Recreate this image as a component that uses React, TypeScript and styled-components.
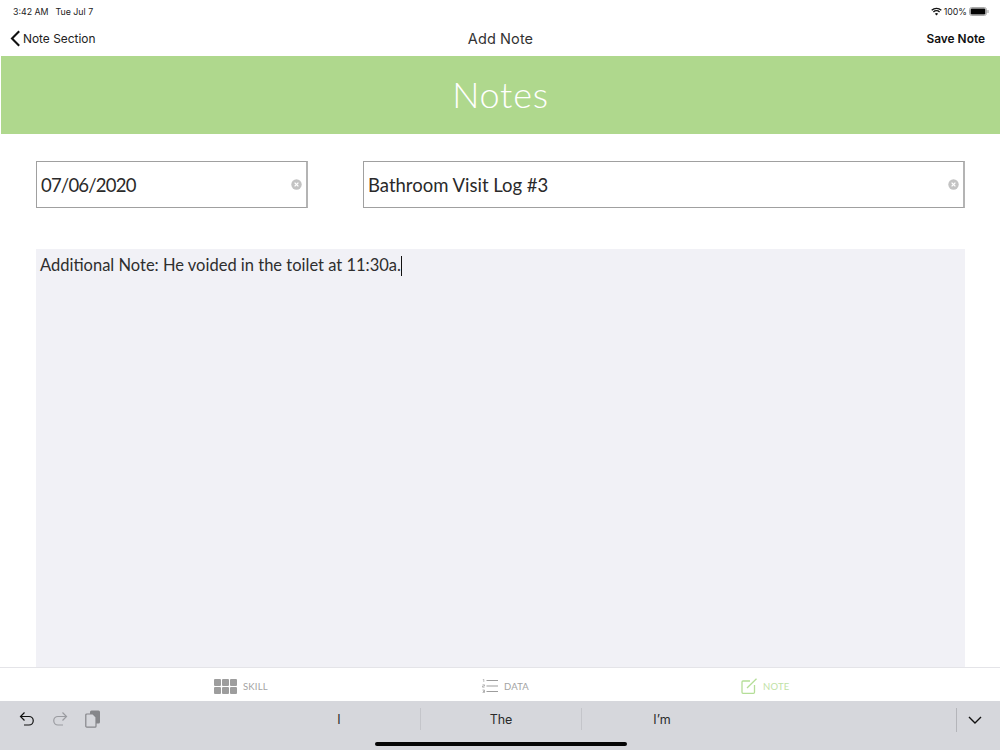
import React from "react";
import styled, { createGlobalStyle } from "styled-components";

const Global = createGlobalStyle`
  html, body { margin: 0; padding: 0; background: #fff; }
  #root { width: 1000px; height: 750px; overflow: hidden; }
`;

const Page = styled.div`
  width: 1000px;
  height: 750px;
  display: flex;
  flex-direction: column;
  background: #fff;
  overflow: hidden;
  font-family: Inter, "Liberation Sans", sans-serif;
  color: #111;
`;

const StatusBar = styled.div`
  height: 22px;
  flex: none;
  display: flex;
  align-items: center;
  justify-content: space-between;
  padding: 0 11px 0 13px;
  font-size: 8.8px;
  color: #222;
`;

const StatusGroup = styled.div<{ $gap: number }>`
  display: flex;
  align-items: center;
  gap: ${(p) => p.$gap}px;
`;

const NavBar = styled.div`
  height: 34px;
  box-sizing: border-box;
  flex: none;
  display: grid;
  grid-template-columns: 1fr auto 1fr;
  align-items: center;
  padding: 0 15px 2px 16px;
`;

const BackLink = styled.div`
  display: flex;
  align-items: center;
  gap: 2px;
  margin-left: -6px;
  font-size: 11.9px;
  color: #222;
`;

const NavTitle = styled.div`
  font-size: 14.5px;
  color: #333;
  letter-spacing: 0.1px;
`;

const SaveButton = styled.div`
  justify-self: end;
  font-size: 11.9px;
  font-weight: 600;
  color: #111;
`;

const Banner = styled.div`
  height: 78px;
  box-sizing: border-box;
  padding-bottom: 2px;
  flex: none;
  margin-left: 1px;
  background: #afd88d;
  display: flex;
  align-items: center;
  justify-content: center;
  font-family: Lato, sans-serif;
  font-weight: 300;
  font-size: 36px;
  letter-spacing: 0.8px;
  color: #fff;
`;

const Content = styled.div`
  flex: 1;
  min-height: 0;
  display: flex;
  flex-direction: column;
  padding: 27px 35px 0 36px;
  font-family: Lato, sans-serif;
`;

const FieldRow = styled.div`
  display: grid;
  grid-template-columns: 272px 602px;
  column-gap: 55px;
  flex: none;
`;

const Field = styled.div<{ $inset: number; $tracking?: number }>`
  height: 47px;
  box-sizing: border-box;
  border: 1px solid #a0a0a0;
  border-right: 2px solid #b4b4b4;
  display: flex;
  align-items: center;
  justify-content: space-between;
  padding: 0 4px 0 ${(p) => p.$inset}px;
  font-size: 18.5px;
  letter-spacing: ${(p) => p.$tracking ?? 0}px;
  color: #2a2a2a;
`;

const NoteArea = styled.div`
  flex: 1;
  min-height: 0;
  margin-top: 41px;
  background: #f1f1f6;
  padding: 6px 4px;
  font-size: 16.5px;
  line-height: 20px;
  color: #2e2e2e;
`;

const Caret = styled.span`
  display: inline-block;
  width: 1px;
  height: 20px;
  background: #111;
  vertical-align: -5px;
`;

const TabBar = styled.div`
  height: 34px;
  box-sizing: border-box;
  flex: none;
  border-top: 1px solid #e4e4e8;
  padding-top: 3px;
  display: grid;
  grid-template-columns: 214px 268px 259px 1fr;
  align-items: center;
  background: #fff;
`;

const Tab = styled.div<{ $active?: boolean; $col: number; $gap: number }>`
  grid-column: ${(p) => p.$col};
  display: flex;
  align-items: center;
  gap: ${(p) => p.$gap}px;
  font-family: Lato, sans-serif;
  font-size: 9.5px;
  letter-spacing: 0.2px;
  color: ${(p) => (p.$active ? "#bfe2a6" : "#a3a3a3")};
`;

const Keyboard = styled.div`
  height: 49px;
  flex: none;
  position: relative;
  background: #d6d7dc;
  display: grid;
  grid-template-columns: 258px 163px 161px 160px 214px 44px;
  align-items: start;
  padding-top: 7px;
  box-sizing: border-box;
`;

const KeyTools = styled.div`
  display: flex;
  align-items: center;
  gap: 17px;
  padding-left: 19px;
  height: 22px;
`;

const Suggestion = styled.div<{ $divider?: boolean }>`
  height: 22px;
  display: flex;
  align-items: center;
  justify-content: center;
  font-size: 12.5px;
  color: #2a2a2a;
  border-right: ${(p) => (p.$divider ? "1px solid #c4c5ca" : "0")};
  box-sizing: border-box;
`;

const Spacer = styled.div`
  height: 22px;
`;

const Dismiss = styled.div`
  height: 24px;
  border-left: 1px solid #b4b5ba;
  display: flex;
  align-items: center;
  justify-content: center;
  box-sizing: border-box;
  padding-right: 7px;
`;

const HomeIndicator = styled.div`
  position: absolute;
  left: 375px;
  bottom: 4px;
  width: 252px;
  height: 4px;
  border-radius: 2px;
  background: #050505;
`;

const ClearIcon = () => (
  <svg width="11" height="11" viewBox="0 0 11 11">
    <circle cx="5.5" cy="5.5" r="5.2" fill="#c3c3c3" />
    <path d="M3.6 3.6l3.8 3.8M7.4 3.6l-3.8 3.8" stroke="#fff" strokeWidth="1.3" />
  </svg>
);

export default function App() {
  return (
    <Page>
      <Global />
      <StatusBar>
        <StatusGroup $gap={7}>
          <span>3:42 AM</span>
          <span>Tue Jul 7</span>
        </StatusGroup>
        <StatusGroup $gap={2}>
          <svg width="11" height="9" viewBox="0 0 11 9" fill="none" stroke="#111" strokeWidth="1.3">
            <path d="M.7 3.2a7 7 0 0 1 9.6 0" />
            <path d="M2.4 5a4.5 4.5 0 0 1 6.2 0" />
            <path d="M5.5 8.6L3.9 6.8a2.3 2.3 0 0 1 3.2 0z" fill="#111" stroke="none" />
          </svg>
          <span>100%</span>
          <svg width="20" height="9" viewBox="0 0 20 9">
            <rect x=".5" y=".5" width="17" height="8" rx="2.2" fill="none" stroke="#aaa" />
            <rect x="1.6" y="1.6" width="14.8" height="5.8" rx="1.2" fill="#050505" />
            <rect x="18.4" y="3" width="1.2" height="3" rx=".6" fill="#aaa" />
          </svg>
        </StatusGroup>
      </StatusBar>
      <NavBar>
        <BackLink>
          <svg width="11" height="17" viewBox="0 0 11 17" fill="none" stroke="#111" strokeWidth="2.1">
            <path d="M9.2 1.2L2 8.5l7.2 7.3" />
          </svg>
          Note Section
        </BackLink>
        <NavTitle>Add Note</NavTitle>
        <SaveButton>Save Note</SaveButton>
      </NavBar>
      <Banner>Notes</Banner>
      <Content>
        <FieldRow>
          <Field $inset={4} $tracking={-0.8}>
            07/06/2020
            <ClearIcon />
          </Field>
          <Field $inset={4}>
            Bathroom Visit Log #3
            <ClearIcon />
          </Field>
        </FieldRow>
        <NoteArea>
          Additional Note: He voided in the toilet at 11:30a.
          <Caret />
        </NoteArea>
      </Content>
      <TabBar>
        <Tab $col={2} $gap={6}>
          <svg width="23" height="15" viewBox="0 0 23 15" fill="#9d9d9d">
            <rect x="0" y="0" width="7" height="7" rx="1" />
            <rect x="8" y="0" width="7" height="7" rx="1" />
            <rect x="16" y="0" width="7" height="7" rx="1" />
            <rect x="0" y="8" width="7" height="7" rx="1" />
            <rect x="8" y="8" width="7" height="7" rx="1" />
            <rect x="16" y="8" width="7" height="7" rx="1" />
          </svg>
          SKILL
        </Tab>
        <Tab $col={3} $gap={5}>
          <svg width="17" height="14" viewBox="0 0 17 14" fill="none" stroke="#9d9d9d">
            <path d="M4.5 1.5H16M4.5 7H16M4.5 12.5H16" />
            <path d="M.8 .6l1-.3v2.6M.5 5.8h2v1.2h-2v1.2h2M.5 11h2v1.3h-1.5h1.5v1.3h-2" strokeWidth=".7" />
          </svg>
          DATA
        </Tab>
        <Tab $col={4} $active $gap={6}>
          <svg width="16" height="16" viewBox="0 0 16 16" fill="none" stroke="#b5de98" strokeWidth="1.3">
            <path d="M9 3H2a1 1 0 0 0-1 1v10.300a1 1 0 0 0 1 1h10.500a1 1 0 0 0 1-1V7" />
            <path d="M6 10L15.500.7" />
          </svg>
          NOTE
        </Tab>
      </TabBar>
      <Keyboard>
        <KeyTools>
          <svg width="16" height="16" viewBox="0 0 16 16" fill="none" stroke="#111" strokeWidth="1.2">
            <path d="M5.500 1.500L1.500 5.500l4 4" />
            <path d="M1.500 5.500H10a4.200 4.200 0 0 1 0 8.500H5" />
          </svg>
          <svg width="16" height="16" viewBox="0 0 16 16" fill="none" stroke="#9a9ba0" strokeWidth="1.2">
            <path d="M10.500 1.500l4 4-4 4" />
            <path d="M14.500 5.500H6a4.200 4.200 0 0 0 0 8.500h5" />
          </svg>
          <svg width="16" height="18" viewBox="0 0 16 18">
            <rect x="5" y=".5" width="10" height="13" rx="1.500" fill="#85868a" />
            <path d="M1.800 4H8l3 3v9.200a1 1 0 0 1-1 1H1.800a1 1 0 0 1-1-1V5a1 1 0 0 1 1-1z" fill="#d6d7dc" stroke="#85868a" strokeWidth="1.200" />
          </svg>
        </KeyTools>
        <Suggestion $divider>I</Suggestion>
        <Suggestion $divider>The</Suggestion>
        <Suggestion>I’m</Suggestion>
        <Spacer />
        <Dismiss>
          <svg width="14" height="8" viewBox="0 0 14 8" fill="none" stroke="#111" strokeWidth="1.400">
            <path d="M1 1l6 6 6-6" />
          </svg>
        </Dismiss>
        <HomeIndicator />
      </Keyboard>
    </Page>
  );
}
